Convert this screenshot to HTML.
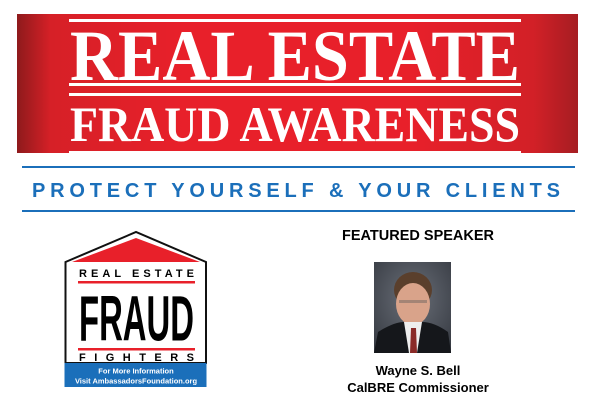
<!DOCTYPE html>
<html><head><style>
body{margin:0;width:600px;height:400px;background:#fff;position:relative;overflow:hidden;font-family:"Liberation Sans",sans-serif}
.a{position:absolute}
.bl{background:#1b6fba;height:2px;left:22px;width:553px}
</style></head><body>
<svg class="a" style="left:17px;top:14px" width="561" height="139" viewBox="0 0 561 139">
<defs><linearGradient id="r" x1="0" x2="1"><stop offset="0" stop-color="#8e1a1c"/><stop offset=".06" stop-color="#d62027"/><stop offset=".3" stop-color="#e8202a"/><stop offset=".7" stop-color="#e8202a"/><stop offset=".92" stop-color="#d22027"/><stop offset="1" stop-color="#a61d22"/></linearGradient></defs>
<rect width="561" height="139" fill="url(#r)"/>
<rect x="52" y="5" width="452" height="3" fill="#fff"/>
<rect x="52" y="69" width="452" height="3" fill="#fff"/>
<rect x="52" y="79" width="452" height="3" fill="#fff"/>
<rect x="52" y="137" width="452" height="2" fill="#fff"/>
<text x="53" y="66" fill="#fff" font-family="Liberation Serif" font-weight="bold" font-size="72" textLength="450" lengthAdjust="spacingAndGlyphs">REAL ESTATE</text>
<text x="53" y="127" fill="#fff" font-family="Liberation Serif" font-weight="bold" font-size="50" textLength="450" lengthAdjust="spacingAndGlyphs">FRAUD AWARENESS</text>
</svg>
<div class="a bl" style="top:166px"></div>
<div class="a bl" style="top:210px"></div>
<svg class="a" style="left:0;top:176px" width="600" height="30"><text x="32" y="21" fill="#1b6fba" font-family="Liberation Sans" font-weight="bold" font-size="20" textLength="528" lengthAdjust="spacing">PROTECT YOURSELF &amp; YOUR CLIENTS</text></svg>

<svg class="a" style="left:64px;top:230px" width="145" height="160" viewBox="0 0 145 160">
<polygon points="1.5,32 72,2 142,32 142,133 1.5,133" fill="#fff" stroke="#111" stroke-width="2"/>
<polygon points="8,32 72,8 136,32" fill="#e8202a"/>
<rect x="14" y="51" width="117" height="2.5" fill="#e8202a"/>
<rect x="14" y="118" width="117" height="2.5" fill="#e8202a"/>
<text x="15" y="47" font-family="Liberation Sans" font-weight="bold" font-size="11" textLength="115" lengthAdjust="spacing">REAL ESTATE</text>
<text x="15" y="110" font-family="Liberation Sans" font-weight="bold" font-size="60" textLength="115" lengthAdjust="spacingAndGlyphs" transform="translate(0,-6) scale(1,1.06)">FRAUD</text>
<text x="15" y="131" font-family="Liberation Sans" font-weight="bold" font-size="11" textLength="115" lengthAdjust="spacing">FIGHTERS</text>
<rect x="0.5" y="133" width="142" height="24" fill="#1b6fba"/>
<text x="72" y="143.5" text-anchor="middle" fill="#fff" font-family="Liberation Sans" font-weight="bold" font-size="7.5">For More Information</text>
<text x="72" y="153.5" text-anchor="middle" fill="#fff" font-family="Liberation Sans" font-weight="bold" font-size="7.5">Visit AmbassadorsFoundation.org</text>
</svg>

<div class="a" style="left:318px;top:228px;width:200px;text-align:center;font-weight:bold;font-size:14.5px">FEATURED SPEAKER</div>
<svg class="a" style="left:374px;top:262px" width="77" height="91" viewBox="0 0 77 91">
<defs><radialGradient id="g" cx="0.5" cy="0.4" r="0.7"><stop offset="0" stop-color="#6a6f78"/><stop offset="1" stop-color="#383c44"/></radialGradient></defs>
<rect width="77" height="91" fill="url(#g)"/>
<ellipse cx="39" cy="28" rx="19" ry="18" fill="#5a3f2c"/>
<ellipse cx="39" cy="42" rx="17" ry="21" fill="#d9a38a"/>
<rect x="25" y="38" width="28" height="3" fill="#555" opacity=".4"/>
<path d="M0 91 L4 70 Q20 60 30 60 L39 91 Z M77 91 L74 70 Q60 60 48 60 L39 91 Z" fill="#15171b"/>
<path d="M30 60 L48 60 L43 91 L35 91 Z" fill="#eee"/>
<path d="M37 66 L42 66 L43 91 L36 91 Z" fill="#8a2a28"/>
</svg>
<div class="a" style="left:318px;top:362px;width:200px;text-align:center;font-weight:bold;font-size:13px;line-height:17px">Wayne S. Bell<br>CalBRE Commissioner</div>
</body></html>
